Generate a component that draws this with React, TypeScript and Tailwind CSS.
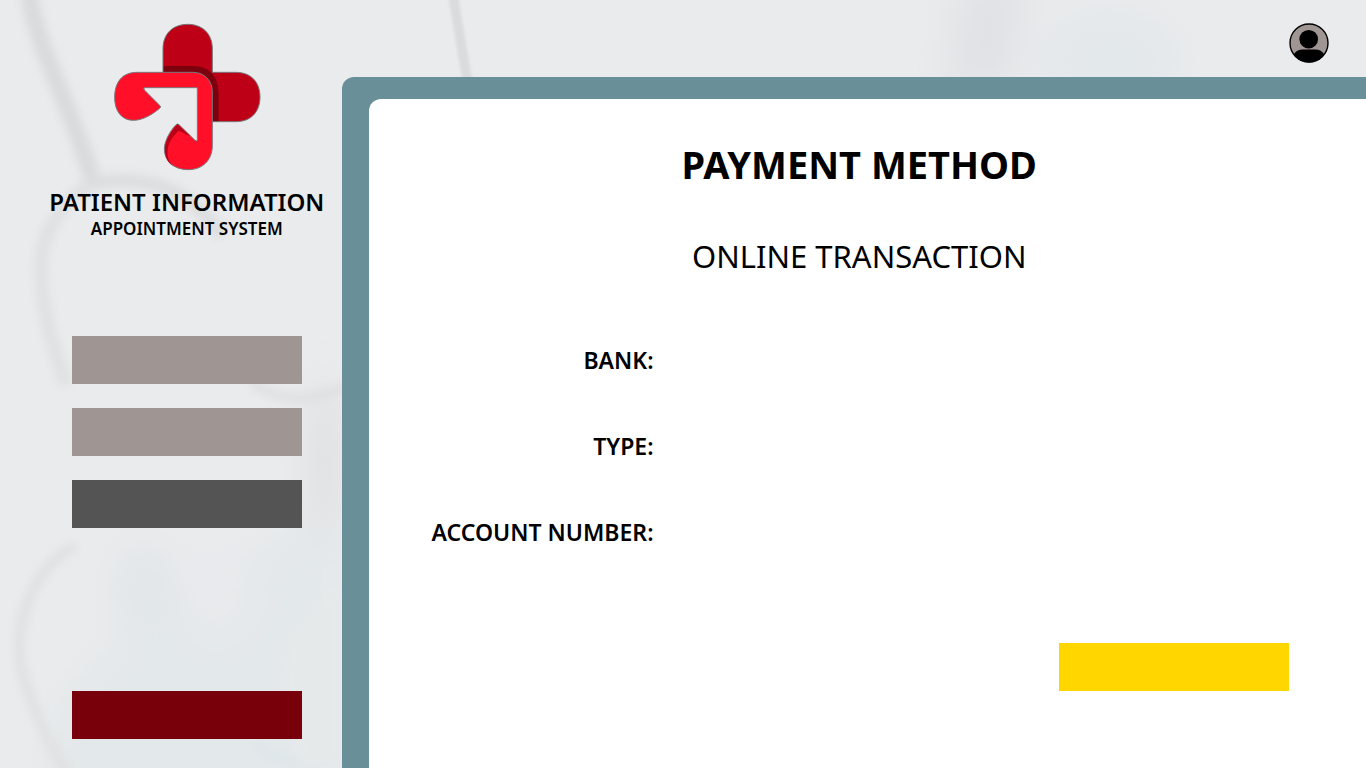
import React from "react";

function Backdrop() {
  return (
    <svg
      className="absolute inset-0 -z-10 h-full w-full"
      viewBox="0 0 1366 768"
      preserveAspectRatio="xMinYMin slice"
      aria-hidden="true"
    >
      <defs>
        <filter id="soft" x="-30%" y="-30%" width="160%" height="160%">
          <feGaussianBlur stdDeviation="5" />
        </filter>
        <filter id="edge" x="-50%" y="-10%" width="200%" height="120%">
          <feGaussianBlur stdDeviation="1.5" />
        </filter>
        <filter id="softer" x="-50%" y="-50%" width="200%" height="200%">
          <feGaussianBlur stdDeviation="18" />
        </filter>
      </defs>
      <rect width="1366" height="768" fill="#eaebed" />
      <g filter="url(#softer)">
        <path d="M40 800 L60 700 L140 620 L342 500 V800 Z" fill="#e3e8ea" />
        <ellipse cx="145" cy="590" rx="30" ry="45" fill="#e1e6e9" />
        <ellipse cx="215" cy="590" rx="35" ry="45" fill="#e9eaed" />
        <ellipse cx="325" cy="460" rx="16" ry="80" fill="#dfdfe1" />
        <ellipse cx="1110" cy="60" rx="70" ry="50" fill="#e3e8eb" />
        <path d="M960 -20 H1030 L1010 90 H945 Z" fill="#e0e2e5" />
      </g>
      <g filter="url(#soft)" fill="none">
        <path d="M25 -30 C34 50 66 90 92 178" stroke="#d9dadc" strokeWidth="17" />
        <path d="M98 180 C60 200 40 235 41 270 C42 310 52 345 66 385" stroke="#dfe0e2" strokeWidth="13" />
        <path d="M88 184 C150 172 190 190 222 236" stroke="#dcdddf" strokeWidth="13" />
        <path d="M75 545 C18 580 10 650 28 690 C40 725 53 752 75 785" stroke="#dfe0e1" strokeWidth="10" />
        <path d="M250 382 C280 402 310 404 350 385" stroke="#dfe0e2" strokeWidth="10" />
        <path d="M255 745 C280 765 315 770 345 755" stroke="#dde5e8" strokeWidth="6" />
      </g>
      <path d="M447 -10 H457 L474 90 H464 Z" fill="#dadbdd" filter="url(#edge)" />
      <path d="M342 575 L288 640 L280 700 L302 768 H342 Z" fill="#e7eaeb" opacity="0.7" filter="url(#soft)" />
    </svg>
  );
}

function Logo() {
  return (
    <svg className="h-[148px] w-[148px]" viewBox="40 38 444 444" role="img" aria-label="Medical cross">
      <path
        d="M190 220 V115 C190 70 220 42 264 42 C308 42 338 70 338 115 V186 H408 C455 186 481 216 481 260 C481 304 455 334 408 334 H310 V220 Z"
        fill="#be0017"
      />
      <path d="M190 167 H280 C330 167 357 200 357 250 V334 H320 V210 H190 Z" fill="#7d000f" />
      <path
        d="M190 186 V115 C190 70 220 42 264 42 C308 42 338 70 338 115 V186 H408 C455 186 481 216 481 260 C481 304 455 334 408 334 H338"
        fill="none"
        stroke="#77787b"
        strokeWidth="3"
      />
      <path
        d="M110 186 H280 C315 186 338 212 338 245 V405 C338 450 309 478 265 478 C222 478 194 452 194 415 C195 388 214 359 229 343 Q234 338 239 344 L286 390 Q293 395 293 387 V232 H136 Q130 232 134 239 L181 286 Q185 290 180 294 C158 312 130 330 101 330 C66 330 45 302 45 262 C45 216 67 187 110 186 Z"
        fill="#ff1028"
        stroke="#77787b"
        strokeWidth="3"
        strokeLinejoin="round"
      />
      <path
        d="M234 342 L272 378 L237 361 C212 385 202 406 204 430 C205 450 214 462 224 469 C205 460 195 441 196 414 C198 388 216 360 234 342 Z"
        fill="#b80018"
      />
    </svg>
  );
}

function Avatar() {
  return (
    <svg className="h-10 w-10" viewBox="0 0 40 40" aria-hidden="true">
      <defs>
        <clipPath id="avatar-disc">
          <circle cx="20" cy="20" r="19.5" />
        </clipPath>
      </defs>
      <circle cx="20" cy="20" r="19" fill="#9f9593" stroke="#000" strokeWidth="1.4" />
      <circle cx="19.7" cy="16.2" r="9.3" fill="#000" />
      <path
        d="M3 40 L5 31 C7 28 10 26.6 14 26.6 H26 C30 26.6 33 28 35 31 L37 40 Z"
        fill="#000"
        clipPath="url(#avatar-disc)"
      />
    </svg>
  );
}

const menu = [
  { name: "Profile", color: "bg-[#9f9593]" },
  { name: "Appointments", color: "bg-[#9f9593]" },
  { name: "Payment", color: "bg-[#545454]" },
];

const fields = [
  { id: "bank", label: "BANK:" },
  { id: "type", label: "TYPE:" },
  { id: "account", label: "ACCOUNT NUMBER:" },
];

export default function App() {
  return (
    <div className="relative isolate flex min-h-screen overflow-hidden font-['Noto_Sans',sans-serif] text-black">
      <Backdrop />
      <aside className="flex w-1/4 shrink-0 flex-col items-center pt-[23px] pb-[29px] pl-8">
        <Logo />
        <p className="mt-[15px] text-2xl leading-8 font-semibold whitespace-nowrap">PATIENT INFORMATION</p>
        <p className="text-[17px] leading-[22px] font-semibold whitespace-nowrap">APPOINTMENT SYSTEM</p>
        <nav className="mt-24 flex flex-col gap-6">
          {menu.map((item) => (
            <button key={item.name} type="button" aria-label={item.name} className={`h-12 w-[230px] ${item.color}`} />
          ))}
        </nav>
        <button type="button" aria-label="Log out" className="mt-auto h-12 w-[230px] bg-[#78000a]" />
      </aside>

      <div className="flex min-w-0 flex-1 flex-col">
        <header className="flex h-[77px] shrink-0 items-center justify-end pt-2 pr-[37px]">
          <button type="button" aria-label="Account" className="rounded-full">
            <Avatar />
          </button>
        </header>
        <div className="flex flex-1 flex-col rounded-tl-xl bg-[#698f99] pt-[22px] pl-[27px]">
          <main className="flex flex-1 flex-col rounded-tl-xl bg-white pt-[39px] pb-[77px]">
            <h1 className="pr-4 text-center text-[38px] leading-[52px] font-bold">PAYMENT METHOD</h1>
            <h2 className="mt-11 pr-4 text-center text-[31px] leading-11 font-normal">ONLINE TRANSACTION</h2>
            <form className="mt-16 flex flex-1 flex-col">
              <div className="flex flex-col gap-[50px]">
                {fields.map((field) => (
                  <div key={field.id} className="flex items-center gap-6 pr-[77px]">
                    <label htmlFor={field.id} className="w-[285px] text-right text-[23px] leading-9 font-semibold">
                      {field.label}
                    </label>
                    <input id={field.id} type="text" className="h-9 min-w-0 flex-1 bg-white px-2 text-xl outline-none" />
                  </div>
                ))}
              </div>
              <button
                type="submit"
                aria-label="Submit payment"
                className="mt-auto mr-[77px] h-12 w-[230px] self-end bg-[#ffd600]"
              />
            </form>
          </main>
        </div>
      </div>
    </div>
  );
}
